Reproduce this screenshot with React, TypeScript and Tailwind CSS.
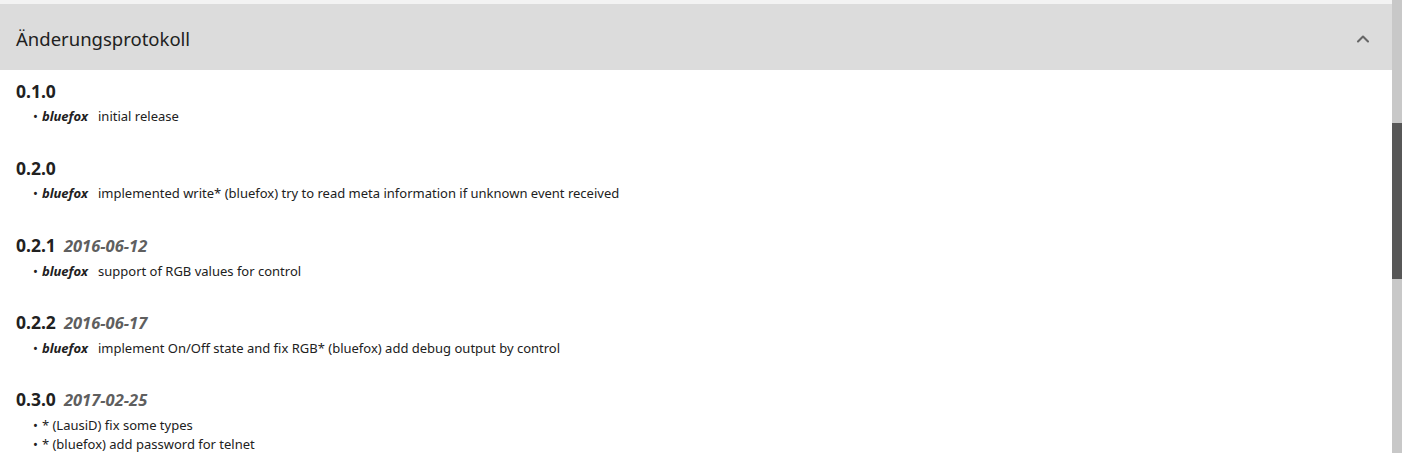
import { ChevronUp } from "lucide-react";

type Entry = {
  version: string;
  date?: string;
  items: { author?: string; text: string }[];
};

const changelog: Entry[] = [
  { version: "0.1.0", items: [{ author: "bluefox", text: "initial release" }] },
  {
    version: "0.2.0",
    items: [
      {
        author: "bluefox",
        text: "implemented write* (bluefox) try to read meta information if unknown event received",
      },
    ],
  },
  {
    version: "0.2.1",
    date: "2016-06-12",
    items: [{ author: "bluefox", text: "support of RGB values for control" }],
  },
  {
    version: "0.2.2",
    date: "2016-06-17",
    items: [
      {
        author: "bluefox",
        text: "implement On/Off state and fix RGB* (bluefox) add debug output by control",
      },
    ],
  },
  {
    version: "0.3.0",
    date: "2017-02-25",
    items: [{ text: "* (LausiD) fix some types" }, { text: "* (bluefox) add password for telnet" }],
  },
];

export default function App() {
  return (
    <div
      className="flex h-[453px] w-[1402px] overflow-hidden bg-white text-[#212121]"
      style={{ fontFamily: '"Noto Sans", "Open Sans", Arial, sans-serif' }}
    >
      <div className="flex min-w-0 flex-1 flex-col">
        <div className="h-[4px] shrink-0 bg-[#f3f3f3]" />
        {/* accordion header */}
        <div className="flex h-[66px] shrink-0 items-center justify-between bg-[#dcdcdc] pl-4 pr-[19px] pt-[3px]">
          <span className="text-[18.5px] font-normal text-[#212121]">Änderungsprotokoll</span>
          <ChevronUp className="h-5 w-5 text-[#666]" strokeWidth={2.5} />
        </div>

        {/* changelog entries */}
        <div className="flex shrink-0 flex-col pl-4 pt-[10px]">
          {changelog.map((entry) => (
            <div key={entry.version} className="h-[77px]">
              <div className="flex items-baseline gap-2 leading-[22px]">
                <span className="text-[17.5px] font-bold">{entry.version}</span>
                {entry.date && (
                  <span className="text-[16.5px] font-bold italic text-[#5f5f5f]">{entry.date}</span>
                )}
              </div>
              <ul className="mt-[5px] pl-[17px]">
                {entry.items.map((item, i) => (
                  <li key={i} className="flex text-[13px] leading-[19px]">
                    <span className="mr-[4px]">•</span>
                    {item.author && <b className="mr-[10px] italic">{item.author}</b>}
                    <span>{item.text}</span>
                  </li>
                ))}
              </ul>
            </div>
          ))}
        </div>
      </div>

      {/* scrollbar */}
      <div className="flex w-[10px] shrink-0 flex-col bg-[#c8c8c8]">
        <div className="h-[123px]" />
        <div className="h-[156px] bg-[#575757]" />
      </div>
    </div>
  );
}
